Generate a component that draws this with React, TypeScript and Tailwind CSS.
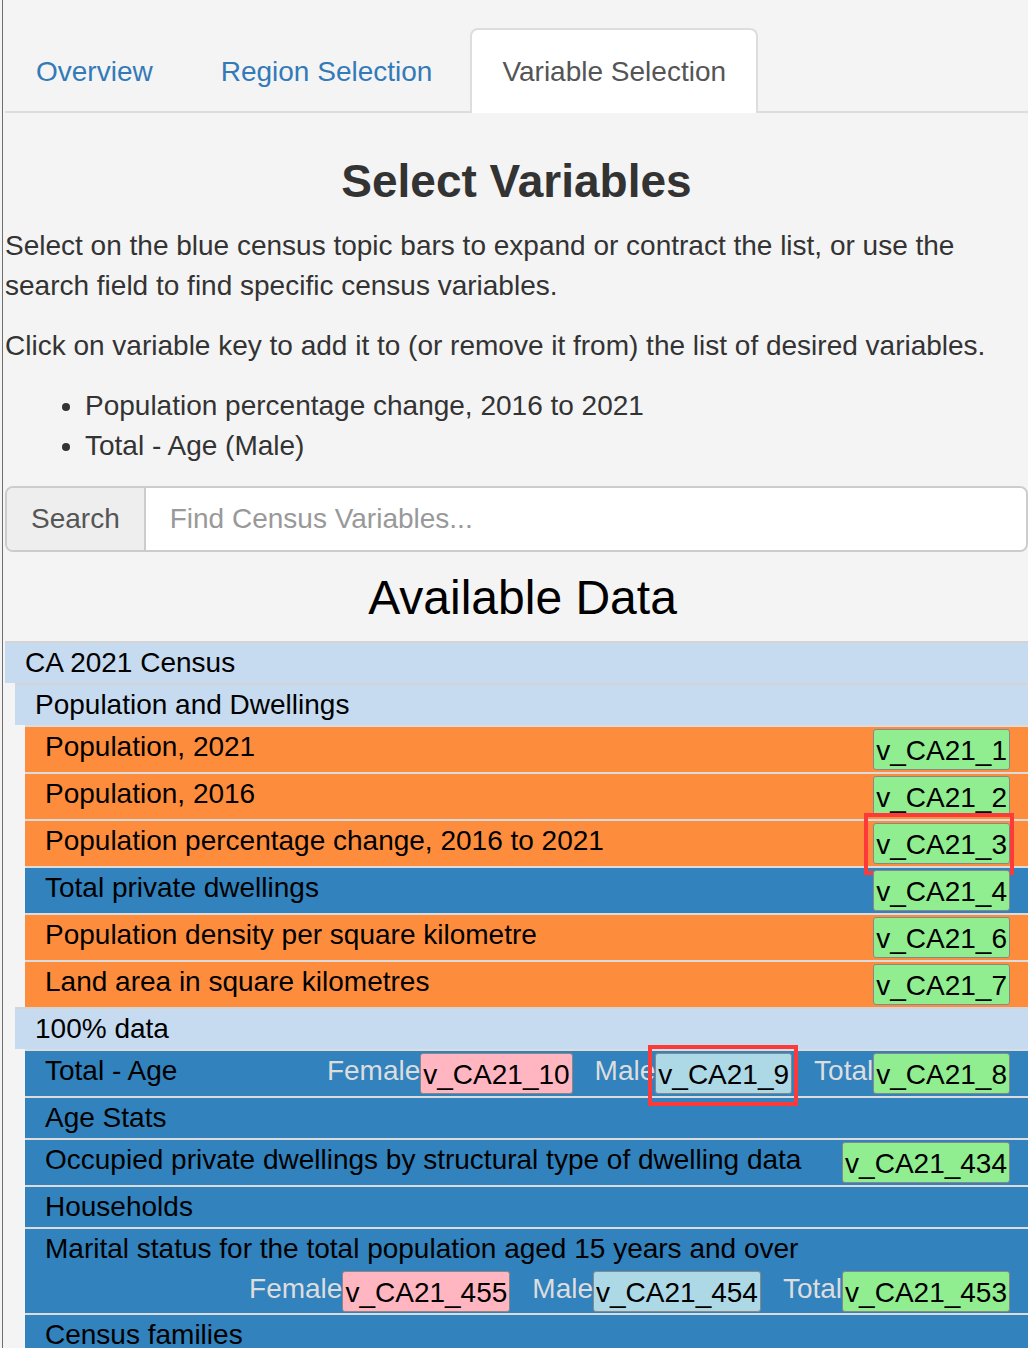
import React from 'react';

type Key = { label?: string; code: string; color: string; marked?: 'a' | 'b' };

type Item = { title: string; tone: 'orange' | 'blue'; keys?: Key[]; wrap?: boolean };

const green = 'bg-[#90ee90]';
const pink = 'bg-[#ffb6c1]';
const lblue = 'bg-[#add8e6]';

const popItems: Item[] = [
  { title: 'Population, 2021', tone: 'orange', keys: [{ code: 'v_CA21_1', color: green }] },
  { title: 'Population, 2016', tone: 'orange', keys: [{ code: 'v_CA21_2', color: green }] },
  {
    title: 'Population percentage change, 2016 to 2021',
    tone: 'orange',
    keys: [{ code: 'v_CA21_3', color: green, marked: 'a' }],
  },
  { title: 'Total private dwellings', tone: 'blue', keys: [{ code: 'v_CA21_4', color: green }] },
  { title: 'Population density per square kilometre', tone: 'orange', keys: [{ code: 'v_CA21_6', color: green }] },
  { title: 'Land area in square kilometres', tone: 'orange', keys: [{ code: 'v_CA21_7', color: green }] },
];

const dataItems: Item[] = [
  {
    title: 'Total - Age',
    tone: 'blue',
    keys: [
      { label: 'Female', code: 'v_CA21_10', color: pink },
      { label: 'Male', code: 'v_CA21_9', color: lblue, marked: 'b' },
      { label: 'Total', code: 'v_CA21_8', color: green },
    ],
  },
  { title: 'Age Stats', tone: 'blue' },
  {
    title: 'Occupied private dwellings by structural type of dwelling data',
    tone: 'blue',
    keys: [{ code: 'v_CA21_434', color: green }],
  },
  { title: 'Households', tone: 'blue' },
  {
    title: 'Marital status for the total population aged 15 years and over',
    tone: 'blue',
    wrap: true,
    keys: [
      { label: 'Female', code: 'v_CA21_455', color: pink },
      { label: 'Male', code: 'v_CA21_454', color: lblue },
      { label: 'Total', code: 'v_CA21_453', color: green },
    ],
  },
  { title: 'Census families', tone: 'blue' },
];

const KeyBadge = ({ k, first }: { k: Key; first: boolean }) => (
  <div className={`flex items-start ${first ? '' : 'ml-[22px]'}`}>
    {k.label && <span className="leading-[40px] text-[#dddddd]">{k.label}</span>}
    <span
      className={`relative mt-[2px] h-[41px] rounded-[3px] border border-[#888888] px-[2px] leading-[41px] text-black ${k.color}`}
    >
      {k.code}
      {k.marked === 'a' && (
        <span className="pointer-events-none absolute -left-[10px] -right-[5px] -top-[11px] -bottom-[12px] border-[4px] border-[#fc3a3a]" />
      )}
      {k.marked === 'b' && (
        <span className="pointer-events-none absolute -left-[8px] -right-[7px] -top-[9px] -bottom-[13px] border-[4px] border-[#fc3a3a]" />
      )}
    </span>
  </div>
);

const Row = ({ item }: { item: Item }) => {
  const bg = item.tone === 'orange' ? 'bg-[#fd8d3c]' : 'bg-[#3182bd]';
  const keys = item.keys ?? [];
  if (item.wrap) {
    return (
      <div className={`border-t-2 border-[#dcdcdc] ${bg} pl-[20px] pr-[18px] pb-[1px]`}>
        <div className="leading-[40px]">{item.title}</div>
        <div className="flex justify-end">
          {keys.map((k, i) => (
            <KeyBadge key={k.code} k={k} first={i === 0} />
          ))}
        </div>
      </div>
    );
  }
  return (
    <div
      className={`flex items-start justify-between border-t-2 border-[#dcdcdc] ${bg} pl-[20px] pr-[18px] ${keys.length ? 'min-h-[47px]' : 'min-h-[42px]'}`}
    >
      <span className="leading-[40px]">{item.title}</span>
      {keys.length > 0 && (
        <div className="flex items-start">
          {keys.map((k, i) => (
            <KeyBadge key={k.code} k={k} first={i === 0} />
          ))}
        </div>
      )}
    </div>
  );
};

const Group = ({ title, children }: { title: string; children?: React.ReactNode }) => (
  <div>
    <div className="border-t-2 border-[#d4d4d4] bg-[#c6dbef] pl-[20px] leading-[40px]">{title}</div>
    {children && <div className="pl-[10px]">{children}</div>}
  </div>
);

export default function App() {
  return (
    <div
      className="min-h-screen overflow-hidden bg-[#f4f4f4] text-[28px]"
      style={{ fontFamily: '"Liberation Sans", Arial, sans-serif' }}
    >
      <div className="ml-[2px] min-h-screen border-l border-[#6e6e6e] pl-[2px]">
        {/* tabs */}
        <div className="flex items-end gap-[8px] border-b-2 border-[#dddddd] pl-[1px] pt-[28px]">
          <a className="-mb-[2px] px-[30px] leading-[83px] text-[#337ab7]">Overview</a>
          <a className="-mb-[2px] px-[30px] leading-[83px] text-[#337ab7]">Region Selection</a>
          <a className="-mb-[2px] rounded-t-[8px] border-2 border-b-0 border-[#dddddd] bg-white px-[30px] leading-[83px] text-[#555555]">
            Variable Selection
          </a>
        </div>

        <div className="text-[#333333]">
          <h2 className="mb-[20px] mt-[43px] text-center text-[46px] font-bold leading-[50px]">Select Variables</h2>
          <p className="mb-[20px] leading-[40px]">
            Select on the blue census topic bars to expand or contract the list, or use the search field to find specific census variables.
          </p>
          <p className="mb-[20px] leading-[40px]">
            Click on variable key to add it to (or remove it from) the list of desired variables.
          </p>
          <ul className="mb-[20px] list-disc pl-[80px] leading-[40px]">
            <li>Population percentage change, 2016 to 2021</li>
            <li>Total - Age (Male)</li>
          </ul>
        </div>

        {/* search */}
        <div className="flex h-[66px] w-[1023px] overflow-hidden rounded-[8px] border-2 border-[#cccccc]">
          <span className="flex items-center border-r-2 border-[#cccccc] bg-[#eeeeee] px-[24px] text-[#555555]">Search</span>
          <input
            className="flex-1 bg-white px-[24px] text-[28px] text-[#555555] outline-none placeholder:text-[#999999]"
            placeholder="Find Census Variables..."
          />
        </div>

        <h3 className="mb-[17px] mt-[19px] pl-[12px] text-center text-[48px] leading-[53px] text-black">Available Data</h3>

        <div className="text-black">
          <Group title="CA 2021 Census">
            <Group title="Population and Dwellings">
              {popItems.map((it) => (
                <Row key={it.title} item={it} />
              ))}
            </Group>
            <Group title="100% data">
              {dataItems.map((it) => (
                <Row key={it.title} item={it} />
              ))}
            </Group>
          </Group>
        </div>
      </div>
    </div>
  );
}
